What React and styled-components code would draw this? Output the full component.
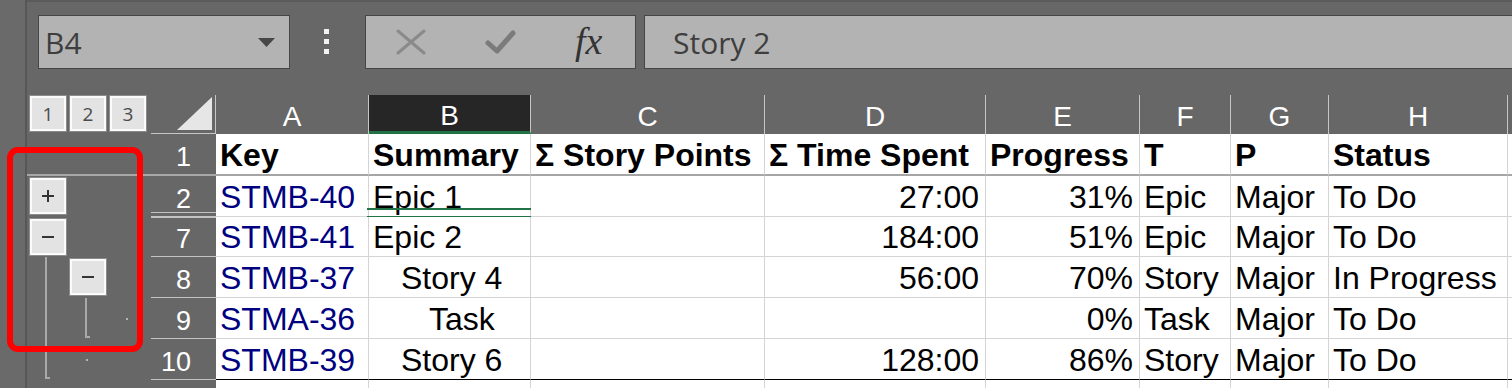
import React from "react";
import styled, { createGlobalStyle } from "styled-components";

const GlobalStyle = createGlobalStyle`
  html, body {
    margin: 0;
    padding: 0;
    background: #676767;
  }
  * {
    box-sizing: border-box;
  }
`;

const ROWS = "39px 42px 41px 40px 41px 41px 41px 1fr";
const GRID = "#d4d4d4";
const GREEN = "#217346";

const Page = styled.div`
  position: relative;
  display: flex;
  width: 1512px;
  height: 388px;
  overflow: hidden;
  background: #676767;
  font-family: "Liberation Sans", Arial, sans-serif;
`;

const LeftStrip = styled.div`
  width: 27px;
  flex: none;
  background: #6a6a6a;
  border-right: 2px solid #575757;
`;

const Workspace = styled.div`
  display: flex;
  flex-direction: column;
  flex: 1;
  min-width: 0;
  border-top: 2px solid #5b5b5b;
`;

/* formula bar */

const FormulaBar = styled.div`
  display: flex;
  align-items: flex-start;
  height: 93px;
  padding: 13px 0 0 11px;
  font-family: "Open Sans", "Noto Sans", sans-serif;
`;

const Box = styled.div`
  display: flex;
  align-items: center;
  height: 54px;
  background: #b3b3b3;
  border: 1px solid #464646;
`;

const NameBox = styled(Box)`
  width: 252px;
  justify-content: space-between;
  padding: 0 14px 0 6px;
  font-size: 30px;
  color: #3e3e3e;
`;

const Dots = styled.div`
  display: flex;
  flex-direction: column;
  gap: 5px;
  margin: 14px 0 0 34px;

  span {
    width: 5px;
    height: 5px;
    background: #f2f2f2;
  }
`;

const FxBox = styled(Box)`
  width: 271px;
  margin-left: 36px;
  padding-left: 30px;
  gap: 59px;
`;

const FxLabel = styled.span`
  font-family: "Liberation Serif", "DejaVu Serif", serif;
  font-style: italic;
  font-size: 38px;
  color: #333;
  transform: translateY(-1px);
`;

const FormulaInput = styled(Box)`
  flex: 1;
  margin: 0 -20px 0 8px;
  padding-left: 28px;
  font-size: 30px;
  color: #3e3e3e;
`;

/* outline gutter */

const Main = styled.div`
  display: flex;
  flex: 1;
  min-height: 0;
`;

const Gutter = styled.div`
  display: grid;
  grid-template-columns: 2px 40px 40px 40px 1fr;
  grid-template-rows: ${ROWS};
  width: 124px;
  flex: none;
`;

const GutterButton = styled.div`
  grid-column: ${({ $col }) => $col + 1};
  grid-row: ${({ $row }) => $row};
  display: flex;
  align-items: center;
  justify-content: center;
  width: 38px;
  height: ${({ $h }) => $h || 38}px;
  margin-top: ${({ $top }) => $top || 0}px;
  background: #e3e3e3;
  border: 1px solid #8c8c8c;
  box-shadow: inset 0 0 0 2px #fbfbfb;
  font-family: "Open Sans", "Noto Sans", sans-serif;
  font-size: 19px;
  color: #4a4a4a;
`;

const Bracket = styled.div`
  grid-column: ${({ $col }) => $col + 1};
  grid-row: ${({ $from }) => $from} / span ${({ $span }) => $span};
  width: 5px;
  margin: 0 0 1px 16px;
  border-left: 2px solid #a9a9a9;
  border-bottom: 2px solid #a9a9a9;
`;

const OutlineDot = styled.div`
  grid-column: ${({ $col }) => $col + 1};
  grid-row: ${({ $row }) => $row};
  align-self: center;
  width: 2px;
  height: 2px;
  margin-left: 17px;
  background: #b4b4b4;
`;

const FreezeLine = styled.div`
  grid-column: 1 / -1;
  grid-row: 2;
  align-self: end;
  height: 2px;
  background: #a8a8a8;
`;

const Callout = styled.div`
  position: absolute;
  left: 7px;
  top: 147px;
  width: 136px;
  height: 205px;
  border: 6px solid #ff0000;
  border-radius: 11px;
  pointer-events: none;
`;

/* sheet */

const Sheet = styled.div`
  display: grid;
  grid-template-columns: 65px 153px 162px 234px 221px 154px 91px 98px 179px 80px;
  grid-template-rows: ${ROWS};
  flex: none;
`;

const Corner = styled.div`
  display: flex;
  align-items: flex-end;
  justify-content: flex-end;
  padding: 0 3px 3px 0;
  border-right: 1px solid #c6c6c6;
  border-bottom: 1px solid #c6c6c6;
`;

const ColHeader = styled.div`
  display: flex;
  align-items: flex-end;
  justify-content: center;
  padding-bottom: ${({ $selected }) => ($selected ? 1 : 3)}px;
  background: ${({ $selected }) => ($selected ? "#262626" : "transparent")};
  border-right: 1px solid #c6c6c6;
  border-bottom: ${({ $selected }) => ($selected ? `3px solid ${GREEN}` : "none")};
  font-size: 28px;
  line-height: 1;
  color: #fff;
`;

const RowHeader = styled.div`
  position: relative;
  display: flex;
  align-items: flex-end;
  justify-content: flex-end;
  padding: 0 25px 3px 0;
  border-bottom: ${({ $freeze }) => ($freeze ? "2px solid #a8a8a8" : "1px solid #c3c3c3")};
  font-size: 27px;
  line-height: 1;
  color: #fff;

  ${({ $hiddenBelow }) =>
    $hiddenBelow &&
    `
    &::after {
      content: "";
      position: absolute;
      left: 0;
      right: 0;
      bottom: -2px;
      height: 4px;
      border-top: 1px solid #c3c3c3;
      border-bottom: 1px solid #c3c3c3;
    }
  `}
`;

const Cell = styled.div`
  position: relative;
  display: flex;
  align-items: flex-end;
  justify-content: ${({ $align }) => ($align === "right" ? "flex-end" : "flex-start")};
  padding: 0 6px 3px ${({ $indent }) => 4 + ($indent || 0) * 28}px;
  background: #fff;
  border-right: 1px solid ${GRID};
  border-bottom: ${({ $edge }) =>
    $edge === "freeze" ? "2px solid #a5a5a5" : $edge === "last" ? "1px solid #000" : `1px solid ${GRID}`};
  font-size: 32px;
  font-weight: ${({ $bold }) => ($bold ? 700 : 400)};
  line-height: 1;
  color: ${({ $link }) => ($link ? "#000080" : "#000")};
  white-space: nowrap;
  overflow: ${({ $mark }) => ($mark ? "visible" : "hidden")};

  ${({ $mark }) =>
    $mark &&
    `
    &::after {
      content: "";
      position: absolute;
      left: -2px;
      right: -3px;
      bottom: -2px;
      height: 6px;
      border-top: 2px solid ${GREEN};
      border-bottom: 2px solid ${GREEN};
    }
  `}
`;

const FillerHeader = styled.div``;

const FillerCell = styled.div`
  background: #fff;
  border-right: 1px solid ${GRID};
`;

const columns = ["A", "B", "C", "D", "E", "F", "G", "H", ""];

const titles = ["Key", "Summary", "Σ Story Points", "Σ Time Spent", "Progress", "T", "P", "Status", "Time"];

const issues = [
  { n: 2, key: "STMB-40", summary: "Epic 1", level: 0, time: "27:00", progress: "31%", type: "Epic", status: "To Do", mark: true, hiddenBelow: true },
  { n: 7, key: "STMB-41", summary: "Epic 2", level: 0, time: "184:00", progress: "51%", type: "Epic", status: "To Do" },
  { n: 8, key: "STMB-37", summary: "Story 4", level: 1, time: "56:00", progress: "70%", type: "Story", status: "In Progress" },
  { n: 9, key: "STMA-36", summary: "Task", level: 2, time: "", progress: "0%", type: "Task", status: "To Do" },
  { n: 10, key: "STMB-39", summary: "Story 6", level: 1, time: "128:00", progress: "86%", type: "Story", status: "To Do" },
];

const CrossIcon = () => (
  <svg width="30" height="26" viewBox="0 0 30 26">
    <path d="M2 2 L28 24 M28 2 L2 24" stroke="#8a8a8a" strokeWidth="3" strokeLinecap="round" fill="none" />
  </svg>
);

const CheckIcon = () => (
  <svg width="31" height="26" viewBox="0 0 31 26">
    <path d="M3 14 L12 22 L28 4" stroke="#7b7b7b" strokeWidth="5" strokeLinecap="round" strokeLinejoin="round" fill="none" />
  </svg>
);

const DropArrow = () => (
  <svg width="17" height="9" viewBox="0 0 17 9">
    <polygon points="0,0 17,0 8.5,9" fill="#474747" />
  </svg>
);

const SelectAll = () => (
  <svg width="35" height="33" viewBox="0 0 35 33">
    <polygon points="35,0 35,33 0,33" fill="#e6e6e6" />
  </svg>
);

const Plus = () => (
  <svg width="12" height="12" viewBox="0 0 12 12">
    <path d="M0 6 H12 M6 0 V12" stroke="#333" strokeWidth="2" />
  </svg>
);

const Minus = () => (
  <svg width="12" height="12" viewBox="0 0 12 12">
    <path d="M0 6 H12" stroke="#333" strokeWidth="2" />
  </svg>
);

const IssueRow = ({ issue, last }) => {
  const edge = last ? "last" : undefined;
  return (
    <>
      <RowHeader $hiddenBelow={issue.hiddenBelow}>{issue.n}</RowHeader>
      <Cell $link $edge={edge}>{issue.key}</Cell>
      <Cell $indent={issue.level} $edge={edge} $mark={issue.mark}>
        {issue.summary}
      </Cell>
      <Cell $edge={edge} />
      <Cell $align="right" $edge={edge}>{issue.time}</Cell>
      <Cell $align="right" $edge={edge}>{issue.progress}</Cell>
      <Cell $edge={edge}>{issue.type}</Cell>
      <Cell $edge={edge}>Major</Cell>
      <Cell $edge={edge}>{issue.status}</Cell>
      <Cell $edge={edge} />
    </>
  );
};

const App = () => {
  return (
    <>
      <GlobalStyle />
      <Page>
        <LeftStrip />
        <Workspace>
          <FormulaBar>
            <NameBox>
              B4
              <DropArrow />
            </NameBox>
            <Dots>
              <span />
              <span />
              <span />
            </Dots>
            <FxBox>
              <CrossIcon />
              <CheckIcon />
              <FxLabel>fx</FxLabel>
            </FxBox>
            <FormulaInput>Story 2</FormulaInput>
          </FormulaBar>

          <Main>
            <Gutter>
              <GutterButton $col={1} $row={1} $h={37}>1</GutterButton>
              <GutterButton $col={2} $row={1} $h={37}>2</GutterButton>
              <GutterButton $col={3} $row={1} $h={37}>3</GutterButton>
              <FreezeLine />
              <GutterButton $col={1} $row={3} $top={1}>
                <Plus />
              </GutterButton>
              <GutterButton $col={1} $row={4} $top={1}>
                <Minus />
              </GutterButton>
              <GutterButton $col={2} $row={5} $top={1}>
                <Minus />
              </GutterButton>
              <Bracket $col={1} $from={5} $span={3} />
              <Bracket $col={2} $from={6} $span={1} />
              <OutlineDot $col={3} $row={6} />
              <OutlineDot $col={2} $row={7} />
            </Gutter>

            <Sheet>
              <Corner>
                <SelectAll />
              </Corner>
              {columns.map((c, i) => (
                <ColHeader key={i} $selected={c === "B"}>
                  {c}
                </ColHeader>
              ))}

              <RowHeader $freeze>1</RowHeader>
              {titles.map((t) => (
                <Cell key={t} $bold $edge="freeze">
                  {t}
                </Cell>
              ))}

              {issues.map((issue, i) => (
                <IssueRow key={issue.n} issue={issue} last={i === issues.length - 1} />
              ))}

              <FillerHeader />
              {columns.map((c, i) => (
                <FillerCell key={i} />
              ))}
            </Sheet>
          </Main>
        </Workspace>
        <Callout />
      </Page>
    </>
  );
};

export default App;
